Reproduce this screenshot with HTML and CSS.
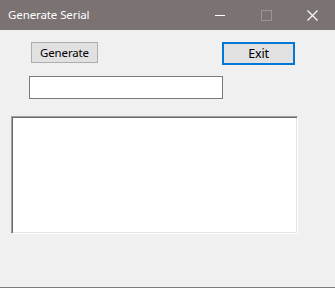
FILE: index.html
```html
<!DOCTYPE html>
<html>
<head>
<meta charset="utf-8">
<link rel="stylesheet" href="styles.css">
</head>
<body>
<div class="window">
  <div class="titlebar">
    <span class="title">Generate Serial</span>
    <div class="controls">
      <span class="ctl"><svg width="11" height="11" viewBox="0 0 11 11"><line x1="0" y1="5.5" x2="10" y2="5.5" stroke="#ffffff" stroke-width="1"/></svg></span>
      <span class="ctl"><svg width="11" height="11" viewBox="0 0 11 11"><rect x="0.5" y="0.5" width="10" height="10" fill="none" stroke="#9b9594" stroke-width="1"/></svg></span>
      <span class="ctl"><svg width="11" height="11" viewBox="0 0 11 11"><path d="M0.5 0.5 L10.5 10.5 M10.5 0.5 L0.5 10.5" stroke="#ffffff" stroke-width="1.1"/></svg></span>
    </div>
  </div>
  <div class="client">
    <div class="row-buttons">
      <button class="btn btn-generate">Generate</button>
      <button class="btn btn-exit">Exit</button>
    </div>
    <div class="textbox"></div>
    <div class="memo"></div>
  </div>
</div>
</body>
</html>
```

FILE: styles.css
```css
html, body {
  margin: 0;
  padding: 0;
}
body {
  width: 335px;
  height: 288px;
  overflow: hidden;
  background: #f0f0f0;
  font-family: "Noto Sans", "Open Sans", sans-serif;
}
.window {
  height: 287px;
  border-bottom: 1px solid #7d7d7d;
  display: flex;
  flex-direction: column;
}
.titlebar {
  height: 30px;
  background: #7a7372;
  display: flex;
  align-items: center;
  justify-content: space-between;
  color: #ffffff;
  flex: none;
}
.title {
  font-size: 11.5px;
  letter-spacing: -0.1px;
  padding-left: 8px;
  line-height: 30px;
  color: #ffffff;
}
.controls {
  display: flex;
  height: 30px;
}
.ctl {
  width: 46px;
  display: flex;
  align-items: center;
  justify-content: center;
}
.ctl svg {
  display: block;
}
.client {
  flex: 1;
  display: flex;
  flex-direction: column;
  align-items: flex-start;
  padding-top: 12px;
}
.row-buttons {
  display: flex;
  align-items: flex-start;
  margin-left: 31px;
  gap: 124px;
}
.btn {
  margin: 0;
  padding: 0;
  font-family: "Noto Sans", "Open Sans", sans-serif;
  font-size: 11.5px;
  letter-spacing: -0.15px;
  color: #000000;
  background: #e1e1e1;
  display: flex;
  align-items: center;
  justify-content: center;
  box-sizing: border-box;
}
.btn-generate {
  width: 67px;
  height: 21px;
  border: 1px solid #adadad;
}
.btn-exit {
  width: 73px;
  height: 23px;
  border: 2px solid #0078d7;
  font-size: 12.5px;
}
.textbox {
  margin-top: 11px;
  margin-left: 29px;
  width: 194px;
  height: 23px;
  box-sizing: border-box;
  background: #ffffff;
  border: 1px solid #7a7a7a;
}
.memo {
  margin-top: 17px;
  margin-left: 11px;
  width: 287px;
  height: 118px;
  box-sizing: border-box;
  background: #ffffff;
  border-top: 1px solid #a0a0a0;
  border-left: 1px solid #a0a0a0;
  border-right: 1px solid #ffffff;
  border-bottom: 1px solid #ffffff;
  box-shadow: inset 1px 1px 0 #696969, inset -1px -1px 0 #e3e3e3;
}
```
